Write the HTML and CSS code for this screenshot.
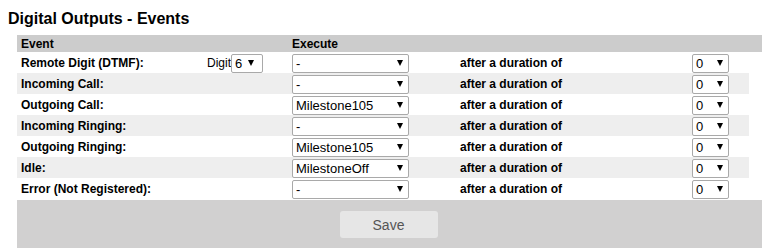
FILE: index.html
```html
<!DOCTYPE html>
<html>
<head>
<meta charset="utf-8">
<title>Digital Outputs - Events</title>
<link rel="stylesheet" href="styles.css">
</head>
<body>
<h1 class="title">Digital Outputs - Events</h1>
<div class="panel">
  <div class="head">
    <div class="c1 span2">Event</div>
    <div class="c3 hx">Execute</div>
  </div>
  <div class="row">
    <div class="c1">Remote Digit (DTMF):</div>
    <div class="c2"><span class="digit">Digit</span><div class="sel sel-digit"><span>6</span><i class="arr"></i></div></div>
    <div class="c3"><div class="sel sel-exec"><span>-</span><i class="arr"></i></div></div>
    <div class="c4">after a duration of</div>
    <div class="c5"><div class="sel sel-dur"><span>0</span><i class="arr"></i></div></div>
  </div>
  <div class="row alt">
    <div class="c1">Incoming Call:</div>
    <div class="c2"></div>
    <div class="c3"><div class="sel sel-exec"><span>-</span><i class="arr"></i></div></div>
    <div class="c4">after a duration of</div>
    <div class="c5"><div class="sel sel-dur"><span>0</span><i class="arr"></i></div></div>
  </div>
  <div class="row">
    <div class="c1">Outgoing Call:</div>
    <div class="c2"></div>
    <div class="c3"><div class="sel sel-exec"><span>Milestone105</span><i class="arr"></i></div></div>
    <div class="c4">after a duration of</div>
    <div class="c5"><div class="sel sel-dur"><span>0</span><i class="arr"></i></div></div>
  </div>
  <div class="row alt">
    <div class="c1">Incoming Ringing:</div>
    <div class="c2"></div>
    <div class="c3"><div class="sel sel-exec"><span>-</span><i class="arr"></i></div></div>
    <div class="c4">after a duration of</div>
    <div class="c5"><div class="sel sel-dur"><span>0</span><i class="arr"></i></div></div>
  </div>
  <div class="row">
    <div class="c1">Outgoing Ringing:</div>
    <div class="c2"></div>
    <div class="c3"><div class="sel sel-exec"><span>Milestone105</span><i class="arr"></i></div></div>
    <div class="c4">after a duration of</div>
    <div class="c5"><div class="sel sel-dur"><span>0</span><i class="arr"></i></div></div>
  </div>
  <div class="row alt">
    <div class="c1">Idle:</div>
    <div class="c2"></div>
    <div class="c3"><div class="sel sel-exec"><span>MilestoneOff</span><i class="arr"></i></div></div>
    <div class="c4">after a duration of</div>
    <div class="c5"><div class="sel sel-dur"><span>0</span><i class="arr"></i></div></div>
  </div>
  <div class="row">
    <div class="c1">Error (Not Registered):</div>
    <div class="c2"></div>
    <div class="c3"><div class="sel sel-exec"><span>-</span><i class="arr"></i></div></div>
    <div class="c4">after a duration of</div>
    <div class="c5"><div class="sel sel-dur"><span>0</span><i class="arr"></i></div></div>
  </div>
  <div class="foot">
    <button class="save" type="button">Save</button>
  </div>
</div>
</body>
</html>
```
FILE: styles.css
```css
html, body {
  margin: 0;
  padding: 0;
  background: #fff;
}
body {
  font-family: "Liberation Sans", Arial, sans-serif;
  color: #000;
  overflow: hidden;
}
.title {
  margin: 10px 0 0 8px;
  font-size: 16px;
  line-height: 18px;
  font-weight: bold;
}
.panel {
  margin: 7px 0 0 17px;
  width: 760px;
}
.head {
  display: grid;
  grid-template-columns: 186px 86px 168px 232px 60px;
  height: 17px;
  align-items: center;
  background: #cccccc;
  font-size: 12px;
  font-weight: bold;
}
.span2 { grid-column: 1 / 3; }
.hx { padding-left: 4px; }
.row {
  display: grid;
  grid-template-columns: 186px 86px 168px 232px 60px;
  width: 732px;
  height: 21px;
  align-items: center;
  font-size: 12px;
  font-weight: bold;
  background: #fff;
}
.row.alt { background: #eeeeee; }
.c1 { padding-left: 4px; }
.c2 {
  display: flex;
  align-items: center;
  padding-left: 4px;
  font-weight: normal;
}
.c3 { padding-left: 3px; }
.c4 { padding-left: 3px; }
.c5 { padding-left: 3px; }
.digit { width: 24px; }
.sel {
  display: flex;
  align-items: center;
  box-sizing: border-box;
  height: 19px;
  margin-top: 1px;
  border: 1px solid #a9a9a9;
  border-radius: 2px;
  background: #fff;
  font-size: 13px;
  font-weight: normal;
  padding-left: 3px;
  color: #000;
}
.sel .arr {
  margin-left: auto;
  width: 0;
  height: 0;
  border-left: 3px solid transparent;
  border-right: 3px solid transparent;
  border-top: 6px solid #000;
}
.sel-exec { width: 117px; padding-right: 5px; }
.sel-digit { width: 32px; padding-right: 8px; }
.sel-dur { width: 37px; padding-right: 5px; }
.foot {
  display: flex;
  justify-content: center;
  padding: 11px 2px 10px 0;
  margin-top: 1px;
  background: #d1d0d0;
  width: 743px;
  height: 27px;
}
.save {
  width: 98px;
  height: 27px;
  border: none;
  border-radius: 3px;
  background: #e6e6e6;
  color: #555;
  font-family: "Liberation Sans", Arial, sans-serif;
  font-size: 14px;
  padding: 0;
}
```
